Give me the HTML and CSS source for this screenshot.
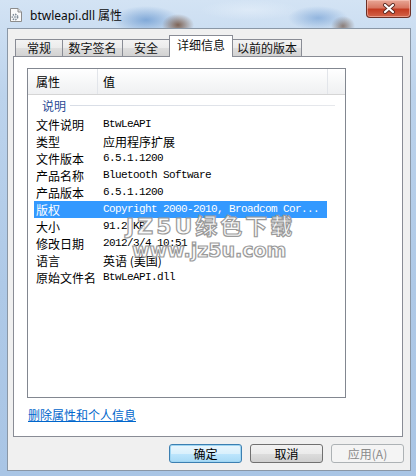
FILE: index.html
```html
<!DOCTYPE html>
<html lang="zh-CN">
<head>
    <meta charset="UTF-8">
    <title>btwleapi.dll 属性</title>
    <link rel="stylesheet" href="styles.css">
</head>
<body>
    <div class="window">
        <!-- Title bar -->
        <div class="titlebar">
            <svg class="file-icon" width="12" height="14" viewBox="0 0 12 14">
                <path d="M0.5 0.5 H8 L11.5 4 V13.5 H0.5 Z" fill="#fafafa" stroke="#8c8c8c"/>
                <path d="M8 0.5 V4 H11.5" fill="#e0e0e0" stroke="#8c8c8c"/>
                <circle cx="5" cy="9" r="2.6" fill="none" stroke="#7d8a96" stroke-width="1.6" stroke-dasharray="1.4 1"/>
                <circle cx="5" cy="9" r="1" fill="#9aa6b2"/>
            </svg>
            <span class="title">btwleapi.dll 属性</span>
            <div class="close-btn">
                <svg width="14" height="11" viewBox="0 0 14 11">
                    <path d="M3 2 L11 9 M11 2 L3 9" stroke="#5b2a22" stroke-width="4" stroke-linecap="round"/>
                    <path d="M3 2 L11 9 M11 2 L3 9" stroke="#ffffff" stroke-width="2.2" stroke-linecap="round"/>
                </svg>
            </div>
        </div>

        <div class="frame">
            <div class="client">
                <!-- Tabs -->
                <div class="tabs">
                    <div class="tab" style="width:48px">常规</div>
                    <div class="tab" style="width:61px">数字签名</div>
                    <div class="tab" style="width:48px">安全</div>
                    <div class="tab active" style="width:64px">详细信息</div>
                    <div class="tab" style="width:70px">以前的版本</div>
                </div>

                <div class="panel">
                    <div class="list">
                        <div class="list-head">
                            <div class="hcol hcol-name">属性</div>
                            <div class="hcol hcol-value">值</div>
                        </div>
                        <div class="group">说明</div>
                        <div class="row"><span class="k">文件说明</span><span class="v">BtwLeAPI</span></div>
                        <div class="row"><span class="k">类型</span><span class="v cn">应用程序扩展</span></div>
                        <div class="row"><span class="k">文件版本</span><span class="v">6.5.1.1200</span></div>
                        <div class="row"><span class="k">产品名称</span><span class="v">Bluetooth Software</span></div>
                        <div class="row"><span class="k">产品版本</span><span class="v">6.5.1.1200</span></div>
                        <div class="row selected"><span class="k">版权</span><span class="v">Copyright 2000-2010, Broadcom Cor...</span></div>
                        <div class="row"><span class="k">大小</span><span class="v">91.2 KB</span></div>
                        <div class="row"><span class="k">修改日期</span><span class="v">2012/3/4 10:51</span></div>
                        <div class="row"><span class="k">语言</span><span class="v cn">英语 (美国)</span></div>
                        <div class="row"><span class="k">原始文件名</span><span class="v">BtwLeAPI.dll</span></div>
                    </div>
                    <a class="link" href="#">删除属性和个人信息</a>
                </div>

                <!-- Dialog buttons -->
                <div class="buttons">
                    <button class="btn default">确定</button>
                    <button class="btn">取消</button>
                    <button class="btn" disabled>应用(A)</button>
                </div>
            </div>
        </div>

        <!-- Site watermark over the screenshot -->
        <div class="watermark">
            <div class="wm-top">JZ5U绿色下载</div>
            <div class="wm-bottom">www.jz5u.com</div>
        </div>
    </div>
</body>
</html>
```

FILE: styles.css
```css
* {
    box-sizing: border-box;
}

body {
    margin: 0;
    font-family: "Noto Sans", "Noto Sans CJK SC", sans-serif;
    font-size: 12px;
    color: #000;
}

.window {
    position: relative;
    width: 416px;
    height: 476px;
    display: flex;
    flex-direction: column;
    overflow: hidden;
    background:
        radial-gradient(ellipse 16px 11px at 178px 25px, rgba(112, 78, 58, 0.85), transparent),
        radial-gradient(ellipse 34px 14px at 146px 20px, rgba(88, 140, 202, 0.65), transparent),
        radial-gradient(ellipse 30px 12px at 318px 18px, rgba(96, 146, 206, 0.55), transparent),
        radial-gradient(ellipse 12px 10px at 343px 26px, rgba(110, 84, 70, 0.7), transparent),
        radial-gradient(ellipse 50px 10px at 250px 10px, rgba(230, 240, 250, 0.6), transparent),
        linear-gradient(180deg, #d3e3f4 0%, #bcd3ec 20%, #aec9e7 60%, #a9c5e5 100%);
}

/* Title bar */
.titlebar {
    height: 28px;
    display: flex;
    align-items: center;
    padding-left: 10px;
}

.file-icon {
    margin-top: 2px;
}

.title {
    margin-left: 8px;
    margin-top: 2px;
    font-size: 12px;
    color: #0b0b0b;
}

.close-btn {
    align-self: flex-start;
    margin-left: auto;
    margin-right: 5px;
    width: 45px;
    height: 18px;
    display: flex;
    align-items: center;
    justify-content: center;
    border: 1px solid #6b3026;
    border-top: none;
    border-radius: 0 0 4px 4px;
    background: linear-gradient(180deg, #e8a796 0%, #d87863 45%, #c43c22 55%, #d3654a 100%);
    box-shadow: inset 0 0 0 1px rgba(255, 210, 200, 0.5);
}

/* Dialog body */
.frame {
    flex: 1;
    display: flex;
    padding: 0 5px 5px 7px;
}

.client {
    flex: 1;
    background: #f0f0f0;
    border: 1px solid #8a97a6;
    display: flex;
    flex-direction: column;
}

.tabs {
    display: flex;
    align-items: flex-end;
    height: 21px;
    margin: 6px 0 0 7px;
    position: relative;
    z-index: 1;
    font-family: "Noto Sans CJK SC", sans-serif;
}

.tab {
    height: 17px;
    margin-right: -1px;
    border: 1px solid #898c95;
    border-bottom: none;
    background: linear-gradient(180deg, #f3f3f3 0%, #ebebeb 50%, #dedede 51%, #d2d2d2 100%);
    text-align: center;
    line-height: 15px;
    color: #111;
}

.tab.active {
    height: 22px;
    margin-bottom: -1px;
    background: #fff;
    line-height: 18px;
}

.panel {
    height: 381px;
    margin: 0 7px 0 5px;
    padding: 11px 0 0 13px;
    border: 1px solid #898c95;
    background: #fff;
}

.list {
    width: 319px;
    height: 330px;
    border: 1px solid #828790;
    background: #fff;
    font-family: "Noto Sans CJK SC", sans-serif;
}

.list-head {
    display: flex;
    height: 26px;
    border-bottom: 1px solid #d5d5d5;
    background: linear-gradient(180deg, #ffffff 0%, #f5f6f7 60%, #eff0f2 100%);
}

.hcol {
    line-height: 25px;
    border-right: 1px solid #e2e5ea;
}

.hcol-name {
    width: 70px;
    padding-left: 8px;
}

.hcol-value {
    width: 230px;
    padding-left: 5px;
}

.group {
    display: flex;
    align-items: center;
    height: 21px;
    padding: 0 10px 0 14px;
    color: #2a4a96;
}

.group::after {
    content: "";
    flex: 1;
    height: 1px;
    margin-left: 4px;
    background: linear-gradient(90deg, #d8dde6, #e6e8ec);
}

.row {
    display: flex;
    width: 293px;
    height: 17px;
    margin-left: 6px;
    line-height: 17px;
    white-space: nowrap;
}

.row.selected {
    background: #3399ff;
    color: #fff;
}

.k {
    width: 69px;
    padding-left: 2px;
}

.v {
    font-family: "Liberation Mono", monospace;
    font-size: 11px;
    letter-spacing: -0.6px;
}

.v.cn {
    font-family: "Noto Sans CJK SC", sans-serif;
    font-size: 12px;
    letter-spacing: 0;
}

.link {
    display: inline-block;
    margin: 9px 0 0 1px;
    line-height: 16px;
    color: #0066cc;
    font-family: "Noto Sans CJK SC", sans-serif;
}

.buttons {
    display: flex;
    justify-content: flex-end;
    gap: 8px;
    padding: 7px 6px 0 0;
}

.btn {
    width: 73px;
    height: 19px;
    padding: 0;
    border: 1px solid #707070;
    border-radius: 3px;
    background: linear-gradient(180deg, #f2f2f2 0%, #ebebeb 50%, #dddddd 51%, #cfcfcf 100%);
    font-family: "Noto Sans CJK SC", sans-serif;
    font-size: 12px;
    line-height: 16px;
    color: #000;
}

.btn.default {
    border-color: #3c7fb1;
    background: linear-gradient(180deg, #eaf6fd 0%, #d9f0fc 50%, #bee6fd 51%, #a7d9f5 100%);
    box-shadow: inset 0 0 0 1px #9fd6f3;
}

.btn:disabled {
    border-color: #adb2b5;
    background: #f4f4f4;
    color: #8a8a8a;
}

/* Watermark */
.watermark {
    position: absolute;
    left: 126px;
    top: 216px;
    font-family: "DejaVu Sans", "Noto Sans CJK SC", sans-serif;
    font-weight: bold;
    color: rgba(250, 250, 250, 0.88);
    -webkit-text-stroke: 1.2px #9a9a9a;
    line-height: 1;
}

.wm-top {
    font-size: 22px;
    letter-spacing: 3px;
}

.wm-top,
.wm-bottom {
    white-space: nowrap;
}

.wm-bottom {
    margin: 3px 0 0 6px;
    font-size: 19px;
}
```
